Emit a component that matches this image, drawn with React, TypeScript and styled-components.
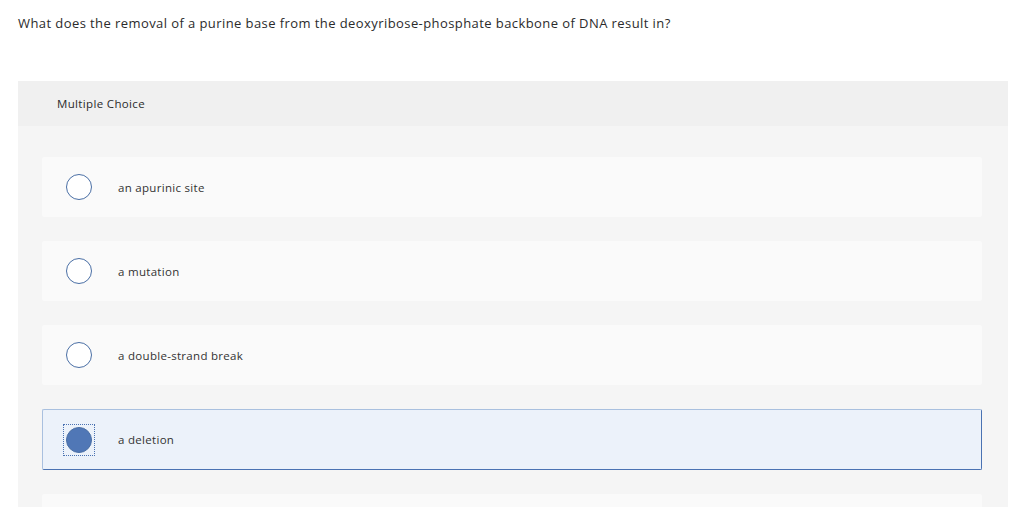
import styled, { createGlobalStyle } from "styled-components";

const GlobalStyle = createGlobalStyle`
    body {
        margin: 0;
        background: #ffffff;
        font-family: "Open Sans", Lato, sans-serif;
        color: #333333;
    }
`

const Page = styled.div`
    padding: 14px 16px 0 18px;
`

const Question = styled.p`
    margin: 0 0 49px 0;
    font-size: 13px;
    letter-spacing: 0.42px;
    line-height: 18px;
    color: #2b2b2b;
`

const Panel = styled.div`
    background: #f5f5f5;
    height: 426px;
    overflow: hidden;
`

const PanelHeader = styled.div`
    background: #f0f0f0;
    height: 45px;
    display: flex;
    align-items: center;
    padding-left: 39px;
    font-size: 11.5px;
    letter-spacing: 0.35px;
    color: #2b2b2b;
`

const OptionList = styled.div`
    display: flex;
    flex-direction: column;
    gap: 24px;
    padding: 31px 26px 0 24px;
`

const Option = styled.label<{ $selected?: boolean }>`
    display: flex;
    align-items: center;
    height: ${p => p.$selected ? "61px" : "60px"};
    box-sizing: border-box;
    padding-left: 20px;
    border-radius: 2px;
    background: ${p => p.$selected ? "#ecf2fa" : "#fafafa"};
    border: 1px solid ${p => p.$selected ? "#a9c0df" : "transparent"};
    border-right-color: ${p => p.$selected ? "#4a72b2" : "transparent"};
    border-bottom-color: ${p => p.$selected ? "#4a72b2" : "transparent"};
    font-size: 11.5px;
    letter-spacing: 0.3px;
    color: #333333;
`

const RadioFocus = styled.span<{ $focused?: boolean }>`
    display: flex;
    align-items: center;
    justify-content: center;
    width: 32px;
    height: 32px;
    box-sizing: border-box;
    border: 1px dotted ${p => p.$focused ? "#4a72b2" : "transparent"};
    flex-shrink: 0;
    margin-right: 23px;
`

const Radio = styled.span<{ $checked?: boolean }>`
    width: 26px;
    height: 26px;
    box-sizing: border-box;
    border-radius: 50%;
    border: 1px solid #4a6fa5;
    background: ${p => p.$checked ? "#5077b6" : "#ffffff"};
`

const CHOICES = [
    "an apurinic site",
    "a mutation",
    "a double-strand break",
    "a deletion",
    "",
]

export default function App() {
    const selected = 3;
    return (
        <Page>
            <GlobalStyle />
            <Question>What does the removal of a purine base from the deoxyribose-phosphate backbone of DNA result in?</Question>
            <Panel>
                <PanelHeader>Multiple Choice</PanelHeader>
                <OptionList>
                    {CHOICES.map((c, i) => (
                        <Option key={i} $selected={i === selected}>
                            {c && (
                                <RadioFocus $focused={i === selected}>
                                    <Radio $checked={i === selected} />
                                </RadioFocus>
                            )}
                            {c}
                        </Option>
                    ))}
                </OptionList>
            </Panel>
        </Page>
    )
}
